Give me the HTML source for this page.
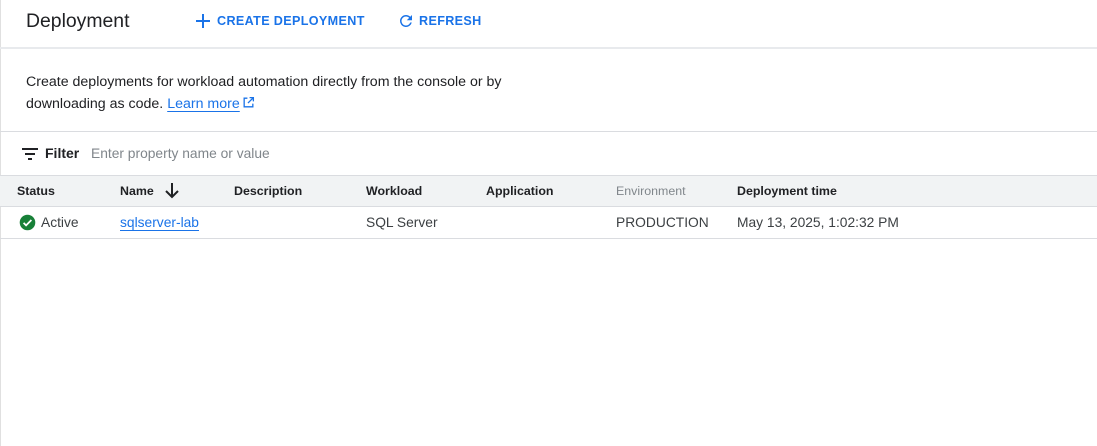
<!DOCTYPE html>
<html><head><style>
body{margin:0;width:1097px;height:446px;background:#fff;font-family:"Liberation Sans",Arial,sans-serif;color:#202124;overflow:hidden;position:relative}
.a{position:absolute;white-space:nowrap}
.hl{position:absolute;left:0;width:1097px;height:1px;background:#dadce0}
.blue{color:#1a73e8}
.h{font-size:12.4px;font-weight:bold;top:184px}
.r{font-size:13.8px;color:#3c4043;top:215px}
</style></head><body>
<div style="position:absolute;left:0;top:0;width:1px;height:446px;background:#e0e0e0"></div>
<div class="a" style="left:26px;top:10px;font-size:19.4px">Deployment</div>
<svg class="a" style="left:195px;top:13px" width="16" height="16" viewBox="0 0 16 16"><path d="M8 1v14M1 8h14" stroke="#1a73e8" stroke-width="2"/></svg>
<div class="a blue" style="left:217px;top:14px;font-size:12.6px;font-weight:bold;letter-spacing:.35px">CREATE DEPLOYMENT</div>
<svg class="a" style="left:397px;top:12px" width="18" height="18" viewBox="0 0 24 24"><path fill="#1a73e8" d="M17.65 6.35A7.96 7.96 0 0 0 12 4a8 8 0 1 0 7.73 10h-2.08A6 6 0 1 1 12 6c1.66 0 3.14.69 4.22 1.78L13 11h7V4l-2.35 2.35z"/></svg>
<div class="a blue" style="left:419px;top:14px;font-size:12.6px;font-weight:bold;letter-spacing:.35px">REFRESH</div>
<div class="hl" style="top:47px;height:2px;background:#e8eaed"></div>
<div class="a" style="left:26px;top:71px;font-size:14.2px;line-height:22px">Create deployments for workload automation directly from the console or by<br>downloading as code. <span class="blue" style="text-decoration:underline;text-underline-offset:3px">Learn more</span><svg width="13" height="13" viewBox="0 0 24 24" style="vertical-align:-1px;margin-left:2px"><path fill="none" stroke="#1a73e8" stroke-width="2.4" d="M10 4H4v16h16v-6M14 3h7v7M21 3l-10 10"/></svg></div>
<div class="hl" style="top:131px"></div>
<svg class="a" style="left:22px;top:147px" width="16" height="14" viewBox="0 0 16 14"><path d="M0 2h16M3 7h10M6 12h4" stroke="#202124" stroke-width="2"/></svg>
<div class="a" style="left:45px;top:145px;font-size:14px;font-weight:bold">Filter</div>
<div class="a" style="left:91px;top:146px;font-size:13.8px;color:#80868b">Enter property name or value</div>
<div class="hl" style="top:175px"></div>
<div style="position:absolute;left:0;top:176px;width:1097px;height:30px;background:#f1f3f4"></div>
<div class="hl" style="top:206px"></div>
<div class="a h" style="left:17px">Status</div>
<div class="a h" style="left:120px">Name</div>
<svg class="a" style="left:164px;top:182px" width="16" height="17" viewBox="0 0 16 17"><path d="M8 1v14M2 9l6 6 6-6" fill="none" stroke="#202124" stroke-width="2"/></svg>
<div class="a h" style="left:234px">Description</div>
<div class="a h" style="left:366px">Workload</div>
<div class="a h" style="left:486px">Application</div>
<div class="a h" style="left:616px;color:#80868b;font-weight:normal">Environment</div>
<div class="a h" style="left:737px">Deployment time</div>
<svg class="a" style="left:19px;top:214px" width="17" height="17" viewBox="0 0 24 24"><circle cx="12" cy="12" r="11" fill="#188038"/><path d="M6.5 12.5l3.5 3.5 7.5-7.5" fill="none" stroke="#fff" stroke-width="2.5"/></svg>
<div class="a r" style="left:41px">Active</div>
<div class="a r blue" style="left:120px;text-decoration:underline;text-underline-offset:3px;color:#1a73e8">sqlserver-lab</div>
<div class="a r" style="left:366px">SQL Server</div>
<div class="a r" style="left:616px">PRODUCTION</div>
<div class="a r" style="left:737px">May 13, 2025, 1:02:32 PM</div>
<div class="hl" style="top:238px"></div>
</body></html>
